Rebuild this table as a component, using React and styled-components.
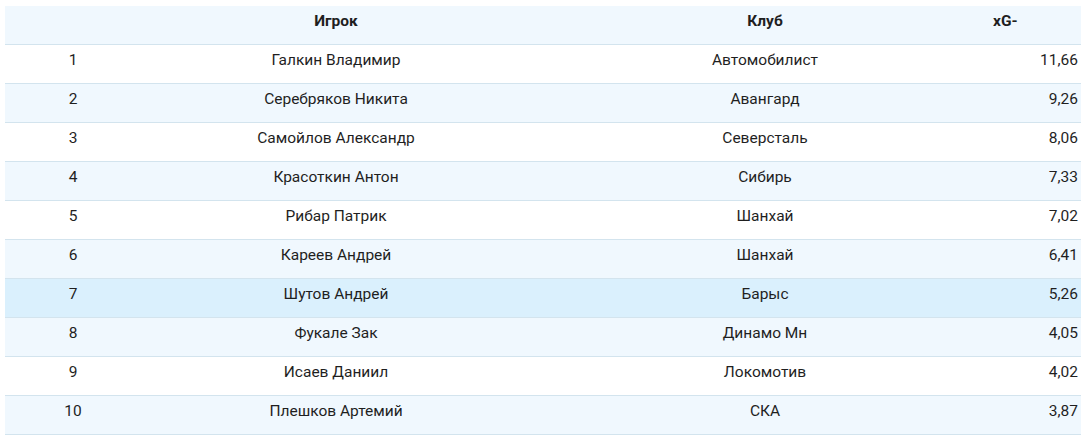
import React from "react"
import styled, { createGlobalStyle } from "styled-components"

const GlobalStyle = createGlobalStyle`
  body {
    margin: 0;
    background: #ffffff;
    font-family: Roboto, "Liberation Sans", sans-serif;
  }
`

const Wrapper = styled.div`
  padding: 6px 7px 0 5px;
`

const Table = styled.table`
  width: 1076px;
  border-collapse: collapse;
  table-layout: fixed;
  font-size: 15.5px;
  line-height: 18px;
  color: #1f1f1f;
`

const HeadRow = styled.tr`
  background: #f0f8fe;
  border-bottom: 1px solid #d3e4ee;
`

const Th = styled.th`
  font-weight: 700;
  padding: 6px 0 14px;
  text-align: ${p => p.$align || "center"};
  padding-left: ${p => p.$padLeft || 0}px;
`

const Row = styled.tr`
  background: ${p => (p.$active ? "#daf0fd" : p.$odd ? "#ffffff" : "#f0f8fe")};
  border-bottom: 1px solid #d3e4ee;
`

const Td = styled.td`
  padding: 6px 0 14px;
  font-weight: 400;
  white-space: nowrap;
  text-align: ${p => p.$align || "center"};
  padding-left: ${p => p.$padLeft || 0}px;
  padding-right: ${p => p.$padRight || 0}px;
`

const rows = [
  ["Галкин Владимир", "Автомобилист", "11,66"],
  ["Серебряков Никита", "Авангард", "9,26"],
  ["Самойлов Александр", "Северсталь", "8,06"],
  ["Красоткин Антон", "Сибирь", "7,33"],
  ["Рибар Патрик", "Шанхай", "7,02"],
  ["Кареев Андрей", "Шанхай", "6,41"],
  ["Шутов Андрей", "Барыс", "5,26"],
  ["Фукале Зак", "Динамо Мн", "4,05"],
  ["Исаев Даниил", "Локомотив", "4,02"],
  ["Плешков Артемий", "СКА", "3,87"],
]

export default function App() {
  return (
    <>
      <GlobalStyle />
      <Wrapper>
        <Table>
          <colgroup>
            <col style={{ width: 136 }} />
            <col style={{ width: 390 }} />
            <col style={{ width: 454 }} />
            <col style={{ width: 96 }} />
          </colgroup>
          <thead>
            <HeadRow>
              <Th></Th>
              <Th>Игрок</Th>
              <Th $padLeft={14}>Клуб</Th>
              <Th $align="left" $padLeft={8}>xG-</Th>
            </HeadRow>
          </thead>
          <tbody>
            {rows.map(([player, club, xg], i) => (
              <Row key={i} $odd={i % 2 === 0} $active={i === 6}>
                <Td>{i + 1}</Td>
                <Td>{player}</Td>
                <Td $padLeft={14}>{club}</Td>
                <Td $align="right" $padRight={3}>{xg}</Td>
              </Row>
            ))}
          </tbody>
        </Table>
      </Wrapper>
    </>
  )
}
